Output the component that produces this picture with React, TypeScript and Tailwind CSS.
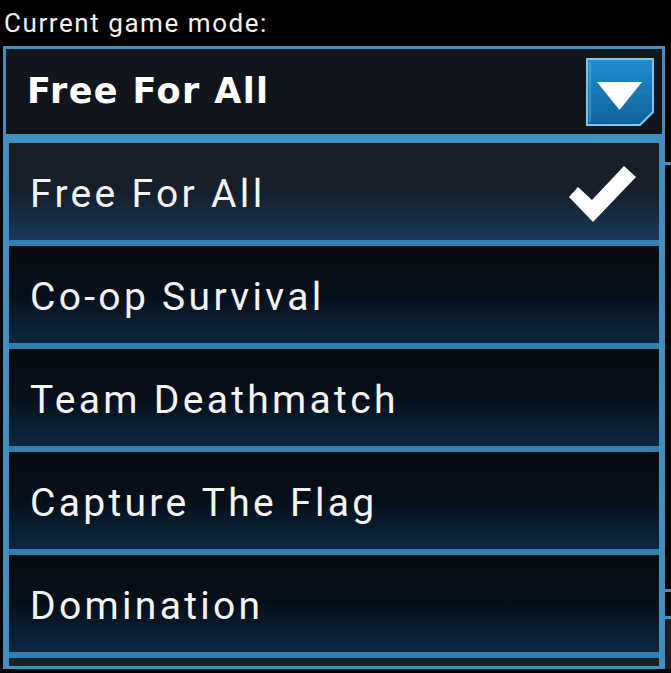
import React from 'react';

const modes = ['Free For All', 'Co-op Survival', 'Team Deathmatch', 'Capture The Flag', 'Domination'];

const DropButton = () => (
  <svg width="68" height="68" viewBox="0 0 68 68">
    <defs>
      <linearGradient id="btn" x1="0" y1="0" x2="0" y2="1">
        <stop offset="0" stopColor="#1f8fd0" />
        <stop offset="1" stopColor="#0f5f98" />
      </linearGradient>
    </defs>
    <path d="M1 1 H67 V54 L54 67 H1 Z" fill="url(#btn)" stroke="#7fc6ec" strokeWidth="2" />
    <path d="M4 4 V64" stroke="#5fb2e0" strokeWidth="1" />
    {[14, 24, 34, 44, 54].map((y) => (
      <path key={y} d={`M3 ${y} H65`} stroke="#ffffff" strokeOpacity="0.06" strokeWidth="1" />
    ))}
    <path d="M11 24 H56 L33.5 52 Z" fill="#ffffff" />
  </svg>
);

const Check = () => (
  <svg width="72" height="62" viewBox="0 0 72 62">
    <path d="M2 33 L11 23 L25 36 L57 2 L69 13 L26 58 Z" fill="#ffffff" />
  </svg>
);

export default function App() {
  return (
    <div className="w-[671px] h-[673px] bg-black overflow-hidden" style={{ fontFamily: 'Roboto, "Noto Sans", sans-serif' }}>
      <div className="pl-[4px] pt-[8px] h-[46px] text-[26px] leading-[30px] text-[#f2f2f2] tracking-[0.06em]">
        Current game mode:
      </div>
      <div className="flex">
        <div className="ml-[3px] w-[662px]">
          <div className="h-[91px] border-[3px] border-[#3f8fc0] bg-[#11161d] flex items-center justify-between pl-[21px] pr-[8px]">
            <span
              className="text-[35px] font-bold text-white tracking-[0.04em]"
              style={{ fontFamily: '"DejaVu Sans", Verdana, sans-serif' }}
            >
              Free For All
            </span>
            <DropButton />
          </div>
          <div className="border-x-[6px] border-t-[6px] border-[#3f8fc0] bg-[#2f7fb0] flex flex-col gap-[6px]">
            {modes.map((m, i) => (
              <div
                key={m}
                className={
                  i === 0
                    ? 'h-[97px] flex items-center justify-between pl-[21px] pr-[20px] pt-[6px] bg-gradient-to-b from-[#1b1f27] via-[#161f2b] to-[#173a5a]'
                    : 'h-[97px] flex items-center pl-[21px] pt-[6px] bg-gradient-to-b from-[#060a11] via-[#07101a] to-[#0d2842]'
                }
              >
                <span className="text-[39px] text-[#f4f4f4] tracking-[0.085em]">{m}</span>
                {i === 0 && <Check />}
              </div>
            ))}
            <div className="h-[11px] bg-[#1b1e25] border-b-[3px] border-[#3f8fc0]" />
          </div>
        </div>
        <div className="flex-1 flex flex-col">
          <div className="h-[116px]" />
          <div className="h-[3px] bg-[#3f8fc0]" />
          <div className="h-[424px]" />
          <div className="h-[3px] bg-[#3f8fc0]" />
          <div className="h-[24px]" />
          <div className="h-[3px] bg-[#3f8fc0]" />
          <div className="flex-1 bg-[#1b1e25]" />
        </div>
      </div>
    </div>
  );
}
